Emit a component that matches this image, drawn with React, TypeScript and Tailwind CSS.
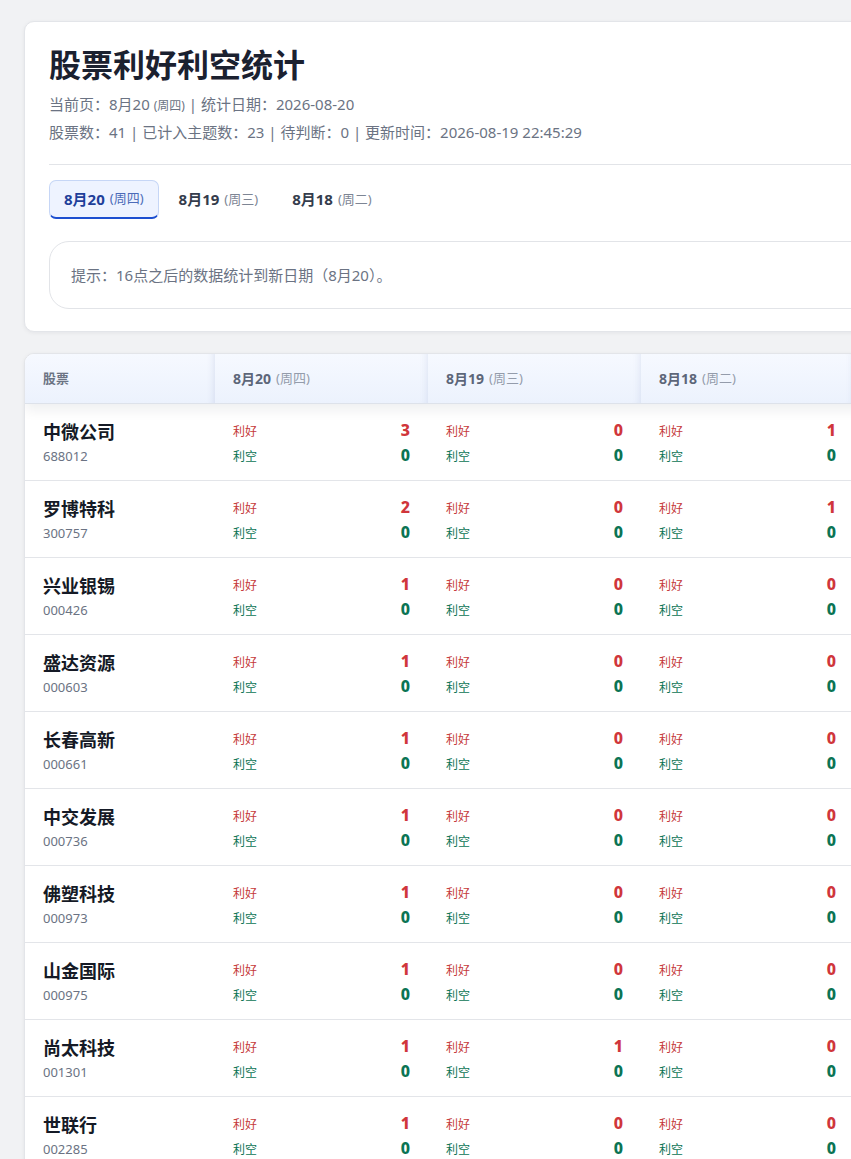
import React from "react";

type Day = { label: string; week: string };
const days: Day[] = [
  { label: "8月20", week: "(周四)" },
  { label: "8月19", week: "(周三)" },
  { label: "8月18", week: "(周二)" },
  { label: "8月17", week: "(周一)" },
];

type Row = { name: string; code: string; vals: [number, number][] };
const rows: Row[] = [
  { name: "中微公司", code: "688012", vals: [[3, 0], [0, 0], [1, 0], [0, 0]] },
  { name: "罗博特科", code: "300757", vals: [[2, 0], [0, 0], [1, 0], [0, 0]] },
  { name: "兴业银锡", code: "000426", vals: [[1, 0], [0, 0], [0, 0], [0, 0]] },
  { name: "盛达资源", code: "000603", vals: [[1, 0], [0, 0], [0, 0], [0, 0]] },
  { name: "长春高新", code: "000661", vals: [[1, 0], [0, 0], [0, 0], [0, 0]] },
  { name: "中交发展", code: "000736", vals: [[1, 0], [0, 0], [0, 0], [0, 0]] },
  { name: "佛塑科技", code: "000973", vals: [[1, 0], [0, 0], [0, 0], [0, 0]] },
  { name: "山金国际", code: "000975", vals: [[1, 0], [0, 0], [0, 0], [0, 0]] },
  { name: "尚太科技", code: "001301", vals: [[1, 0], [1, 0], [0, 0], [0, 0]] },
  { name: "世联行", code: "002285", vals: [[1, 0], [0, 0], [0, 0], [0, 0]] },
  { name: "拓维信息", code: "002261", vals: [[1, 0], [0, 0], [0, 0], [0, 0]] },
];

export default function App() {
  return (
    <div
      className="w-full overflow-x-hidden bg-[#f1f2f4] min-h-screen"
      style={{ fontFamily: '"Noto Sans", "Noto Sans CJK SC", sans-serif' }}
    >
      <div className="w-[1180px] pl-[24px] pt-[21px] pb-10 flex flex-col gap-[22px]">
        {/* Top card */}
        <div className="bg-white rounded-[10px] border border-[#e3e5e9] shadow-[0_1px_4px_rgba(15,23,42,0.06)] px-[24px] pt-[23px] pb-[22px]">
          <h1 className="text-[32px] leading-[40px] font-bold text-[#1b2130]">股票利好利空统计</h1>
          <div className="mt-[6px] text-[15px] leading-[27px] text-[#6b7383]">
            <div>
              当前页：8月20 <span className="text-[12px]">(周四)</span> | 统计日期：2026-08-20
            </div>
            <div>股票数：41 | 已计入主题数：23 | 待判断：0 | 更新时间：2026-08-19 22:45:29</div>
          </div>
          <div className="mt-[18px] border-t border-[#e2e4e8]" />
          <div className="mt-[15px] flex gap-[6px]">
            {days.slice(0, 3).map((d, i) =>
              i === 0 ? (
                <div
                  key={d.label}
                  className="h-[39px] px-[14px] flex items-center rounded-[7px] bg-[#eef3ff] border border-[#c6d6f6] border-b-2 border-b-[#1d4fd0]"
                >
                  <span className="text-[15px] font-bold text-[#1f3f9a]">{d.label}</span>
                  <span className="ml-[5px] text-[13px] text-[#4c6bb8]">{d.week}</span>
                </div>
              ) : (
                <div key={d.label} className="h-[39px] px-[14px] flex items-center">
                  <span className="text-[15px] font-bold text-[#343c4c]">{d.label}</span>
                  <span className="ml-[5px] text-[13px] text-[#7d8594]">{d.week}</span>
                </div>
              )
            )}
          </div>
          <div className="mt-[22px] h-[68px] rounded-[20px] border border-[#e2e4e8] px-[21px] flex items-center text-[15px] text-[#6b7383]">
            提示：16点之后的数据统计到新日期（8月20）。
          </div>
        </div>

        {/* Table card */}
        <div className="-mt-px bg-white rounded-[10px] border border-[#e3e5e9] shadow-[0_1px_4px_rgba(15,23,42,0.06)] overflow-hidden">
          <div className="relative z-10 flex h-[50px] border-b border-[#dde2ea] shadow-[0_6px_12px_rgba(15,23,42,0.07)] bg-gradient-to-b from-[#f6f9ff] to-[#ecf2fd]">
            <div className="w-[190px] shrink-0 px-[18px] flex items-center text-[13px] font-bold text-[#6b7383] shadow-[inset_-8px_0_8px_-8px_rgba(30,58,138,0.14)]">
              股票
            </div>
            {days.map((d) => (
              <div
                key={d.label}
                className="w-[213px] shrink-0 px-[18px] flex items-center shadow-[inset_-8px_0_8px_-8px_rgba(30,58,138,0.12)]"
              >
                <span className="text-[14px] font-bold text-[#5d6679]">{d.label}</span>
                <span className="ml-[5px] text-[13px] text-[#949cab]">{d.week}</span>
              </div>
            ))}
          </div>
          {rows.map((r) => (
            <div key={r.code} className="flex h-[77px] border-b border-[#e3e5e9]">
              <div className="w-[190px] shrink-0 px-[18px] flex flex-col justify-center pt-[3px]">
                <div className="text-[18px] leading-[25px] font-bold text-[#151a26]">{r.name}</div>
                <div className="text-[13px] leading-[23px] text-[#6b7383]">{r.code}</div>
              </div>
              {r.vals.map(([good, bad], i) => (
                <div key={i} className="w-[213px] shrink-0 px-[18px] flex flex-col justify-center pt-[4px]">
                  <div className="flex items-center justify-between h-[25px]">
                    <span className="text-[12px] text-[#c53a3a]">利好</span>
                    <span className="text-[16px] font-extrabold text-[#d0363b] -mt-[4px]">{good}</span>
                  </div>
                  <div className="flex items-center justify-between h-[25px]">
                    <span className="text-[12px] text-[#0b7454]">利空</span>
                    <span className="text-[16px] font-extrabold text-[#0b7454] -mt-[4px]">{bad}</span>
                  </div>
                </div>
              ))}
            </div>
          ))}
        </div>
      </div>
    </div>
  );
}
